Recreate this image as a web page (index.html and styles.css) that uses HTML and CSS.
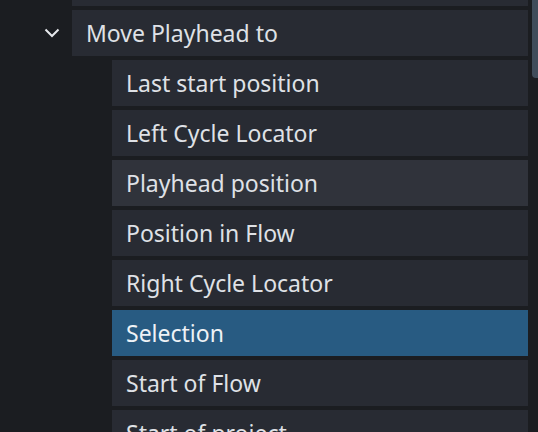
FILE: index.html
```html
<!DOCTYPE html>
<html>
<head>
<meta charset="utf-8">
<link rel="stylesheet" href="styles.css">
</head>
<body>
<div class="tree">
  <div class="row level0"><div class="cell"></div></div>
  <div class="row level0">
    <span class="twisty">
      <svg width="16" height="10" viewBox="0 0 16 10"><path d="M1.5 1.5 L8 8 L14.5 1.5" fill="none" stroke="#e6e8ec" stroke-width="2"/></svg>
    </span>
    <div class="cell">Move Playhead to</div>
  </div>
  <div class="row level1"><div class="cell">Last start position</div></div>
  <div class="row level1"><div class="cell">Left Cycle Locator</div></div>
  <div class="row level1"><div class="cell hover">Playhead position</div></div>
  <div class="row level1"><div class="cell">Position in Flow</div></div>
  <div class="row level1"><div class="cell">Right Cycle Locator</div></div>
  <div class="row level1"><div class="cell selected">Selection</div></div>
  <div class="row level1"><div class="cell">Start of Flow</div></div>
  <div class="row level1"><div class="cell">Start of project</div></div>
</div>
<div class="scrollbar"></div>
</body>
</html>
```
FILE: styles.css
```css
html, body {
  margin: 0;
  padding: 0;
  background: #1b1d21;
  overflow: hidden;
  height: 432px;
}
body {
  font-family: "Noto Sans", "Open Sans", sans-serif;
  font-size: 23px;
  color: #dfe1e6;
}
.tree {
  display: flex;
  flex-direction: column;
  gap: 4px;
  margin-top: -40px;
  padding-right: 10px;
}
.row {
  display: flex;
  position: relative;
  height: 46px;
}
.level0 { padding-left: 72px; }
.level1 { padding-left: 112px; }
.twisty {
  position: absolute;
  left: 44px;
  top: 0;
  height: 46px;
  width: 16px;
  display: flex;
  align-items: center;
}
.twisty svg { display: block; }
.cell {
  flex: 1;
  background: #282b33;
  display: flex;
  align-items: center;
  padding-left: 14px;
  white-space: nowrap;
  overflow: hidden;
}
.cell.hover { background: #30333b; }
.cell.selected { background: #285b82; color: #eef2f6; }
.scrollbar {
  position: absolute;
  right: 0;
  top: 0;
  width: 6px;
  height: 78px;
  background: #404c5a;
  border-bottom-left-radius: 4px;
}
```
